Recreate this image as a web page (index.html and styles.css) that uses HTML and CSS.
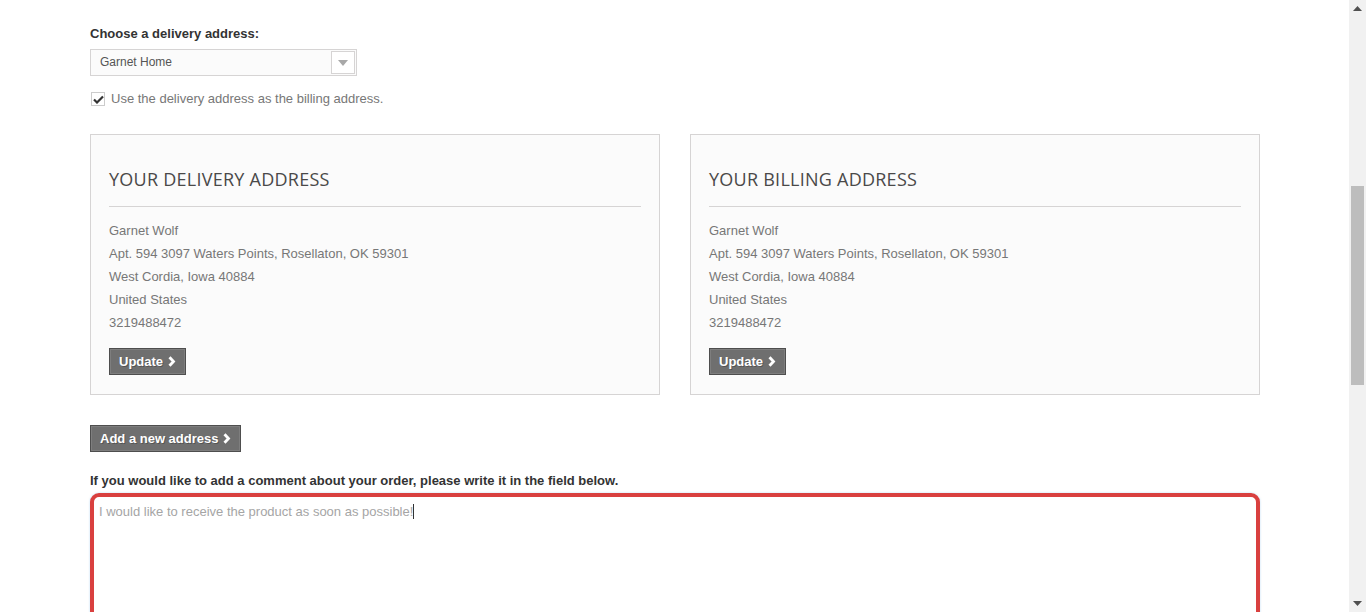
FILE: index.html
```html
<!DOCTYPE html>
<html lang="en">
<head>
<meta charset="utf-8">
<title>Addresses</title>
<link rel="stylesheet" href="styles.css">
</head>
<body>
<div class="page">
  <main class="container">
    <p class="label">Choose a delivery address:</p>
    <div class="select">
      <span class="select-value">Garnet Home</span>
      <span class="select-arrow"><svg width="10" height="6" viewBox="0 0 10 6"><path d="M0 0h10L5 6z" fill="#a8a8a8"/></svg></span>
    </div>
    <label class="check-row">
      <span class="checkbox"><svg width="11" height="9" viewBox="0 0 11 9"><path d="M1 4.5l3 3 6-6" fill="none" stroke="#333" stroke-width="2.2"/></svg></span>
      <span>Use the delivery address as the billing address.</span>
    </label>

    <div class="addresses">
      <section class="address-box">
        <h3 class="address-title">YOUR DELIVERY ADDRESS</h3>
        <ul class="address-lines">
          <li>Garnet Wolf</li>
          <li>Apt. 594 3097 Waters Points, Rosellaton, OK 59301</li>
          <li>West Cordia, Iowa 40884</li>
          <li>United States</li>
          <li>3219488472</li>
        </ul>
        <button class="btn">Update <svg class="chev" width="8" height="11" viewBox="0 0 8 11"><path d="M1.5 1.2l4 4.3-4 4.3" fill="none" stroke="#fff" stroke-width="2.8"/></svg></button>
      </section>
      <section class="address-box">
        <h3 class="address-title">YOUR BILLING ADDRESS</h3>
        <ul class="address-lines">
          <li>Garnet Wolf</li>
          <li>Apt. 594 3097 Waters Points, Rosellaton, OK 59301</li>
          <li>West Cordia, Iowa 40884</li>
          <li>United States</li>
          <li>3219488472</li>
        </ul>
        <button class="btn">Update <svg class="chev" width="8" height="11" viewBox="0 0 8 11"><path d="M1.5 1.2l4 4.3-4 4.3" fill="none" stroke="#fff" stroke-width="2.8"/></svg></button>
      </section>
    </div>

    <button class="btn btn-add">Add a new address <svg class="chev" width="8" height="11" viewBox="0 0 8 11"><path d="M1.5 1.2l4 4.3-4 4.3" fill="none" stroke="#fff" stroke-width="2.8"/></svg></button>

    <p class="label comment-label">If you would like to add a comment about your order, please write it in the field below.</p>
    <div class="textarea">I would like to receive the product as soon as possible!<span class="caret"></span></div>
  </main>
  <div class="scrollbar">
    <span class="sb-btn"><svg width="9" height="5" viewBox="0 0 9 5"><path d="M0 5h9L4.5 0z" fill="#505050"/></svg></span>
    <div class="sb-track">
      <div class="sb-thumb"></div>
    </div>
    <span class="sb-btn"><svg width="9" height="5" viewBox="0 0 9 5"><path d="M0 0h9L4.5 5z" fill="#505050"/></svg></span>
  </div>
</div>
</body>
</html>
```

FILE: styles.css
```css
* { box-sizing: border-box; }
html, body { margin: 0; padding: 0; height: 612px; overflow: hidden; background: #fff; }
body { font-family: "Liberation Sans", Arial, sans-serif; font-size: 13px; color: #777; }

.page { display: flex; height: 612px; }
.container { flex: 1; padding: 25px 89px 0 90px; min-width: 0; }

.label { margin: 0; font-weight: bold; color: #333; line-height: 18px; }

.select {
  margin-top: 6px;
  width: 267px; height: 27px;
  border: 1px solid #d6d4d4;
  background: #fbfbfb;
  display: flex; align-items: stretch;
}
.select-value { flex: 1; padding-left: 9px; font-size: 12px; color: #555; line-height: 25px; }
.select-arrow {
  width: 24px; margin: 1px;
  border: 1px solid #d6d4d4;
  background: #fff;
  display: flex; align-items: center; justify-content: center;
}

.check-row { display: flex; align-items: center; gap: 6px; margin-top: 14px; line-height: 18px; }
.checkbox {
  width: 14px; height: 14px; margin-left: 1px;
  border: 1px solid #ccc; background: #fff;
  display: flex; align-items: center; justify-content: center;
}

.addresses { display: grid; grid-template-columns: 1fr 1fr; gap: 30px; margin-top: 26px; }
.address-box {
  border: 1px solid #d6d4d4;
  background: #fbfbfb;
  padding: 32px 18px 18px 18px;
  height: 261px;
}
.address-title {
  margin: 0;
  font-family: "Open Sans", sans-serif;
  font-weight: 400;
  font-size: 18px;
  line-height: 24px;
  letter-spacing: 0.25px;
  color: #4a4949;
  padding-bottom: 15px;
  border-bottom: 1px solid #d6d4d4;
}
.address-lines { list-style: none; margin: 12px 0 0; padding: 0; line-height: 23px; }

.btn {
  display: inline-flex; align-items: center; gap: 5px;
  height: 27px; margin-top: 14px;
  padding: 0 9px;
  background: #6f6f6f;
  border: 1px solid #4e4e4e;
  box-shadow: inset 0 0 0 1px #7e7e7e;
  color: #fff;
  font-family: "Liberation Sans", Arial, sans-serif;
  font-size: 13px; font-weight: bold;
  text-shadow: 1px 1px rgba(0,0,0,0.25);
  cursor: pointer;
}
.chev { display: block; }
.btn-add { margin-top: 30px; }

.comment-label { margin-top: 20px; }
.textarea {
  margin-top: 3px;
  height: 140px;
  border: 4px solid #d9403f;
  border-radius: 9px;
  box-shadow: 0 0 2px rgba(102,175,233,0.5);
  padding: 6px 5px;
  color: #a5a5a5;
  font-size: 13px;
  line-height: 18px;
}
.caret { display: inline-block; width: 1px; height: 15px; background: #333; vertical-align: -3px; }

.scrollbar { width: 17px; flex: none; background: #f1f1f1; display: flex; flex-direction: column; }
.sb-btn { height: 17px; display: flex; align-items: center; justify-content: center; flex: none; }
.sb-track { flex: 1; padding: 169px 2px 0; }
.sb-thumb { height: 199px; background: #bdbdbd; }
```
